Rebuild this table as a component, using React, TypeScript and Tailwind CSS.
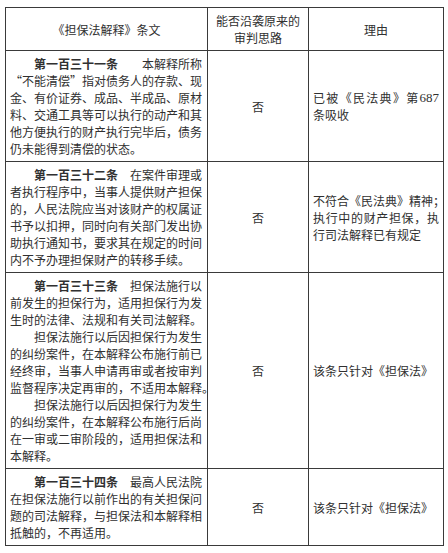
import React from "react";

const FONT = { fontFamily: '"Noto Sans CJK SC", "Noto Sans", sans-serif' };

function Ch({ c, bold }: { c: string; bold?: boolean }) {
  if (c === "687") {
    return (
      <span style={{ fontFamily: '"Liberation Serif", serif' }} className="text-[13px]">
        {c}
      </span>
    );
  }
  const align = c === "“" ? "text-right" : c === "”" ? "text-left" : "text-left";
  const cls = ["inline-block w-[12px] overflow-visible", align, bold ? "font-bold" : ""].join(" ");
  return <span className={cls}>{c === "　" ? "\u00a0" : c}</span>;
}

function L({ t, b, last, indent }: { t: string | string[]; b?: string; last?: boolean; indent?: boolean }) {
  const boldChars = b ? Array.from(b) : [];
  const tokens = Array.isArray(t) ? t : Array.from(t);
  const cls = [
    "flex whitespace-nowrap",
    last ? "justify-start" : "justify-between",
    indent ? "pl-[24px]" : "",
  ].join(" ");
  return (
    <div className={cls}>
      {boldChars.map((c, i) => (
        <Ch key={"b" + i} c={c} bold />
      ))}
      {tokens.map((c, i) => (
        <Ch key={"t" + i} c={c} />
      ))}
    </div>
  );
}

function Row({ left, right }: { left: React.ReactNode; right: React.ReactNode }) {
  return (
    <tr>
      <td className="border border-[#3a3a3a] pl-[4px] pr-[5px] py-[4px] align-top">{left}</td>
      <td className="border border-[#3a3a3a] text-center align-middle">否</td>
      <td className="border border-[#3a3a3a] px-[4px] align-middle">{right}</td>
    </tr>
  );
}

export default function App() {
  return (
    <div className="w-[448px] h-[553px] bg-white overflow-hidden pt-[7px] pl-[5px]" style={FONT} lang="zh-CN">
      <table className="table-fixed border-collapse w-[438px] text-[12px] leading-[17px] text-[#303030]">
        <colgroup>
          <col className="w-[202px]" />
          <col className="w-[101px]" />
          <col className="w-[135px]" />
        </colgroup>
        <thead>
          <tr>
            <th className="border border-[#3a3a3a] font-normal text-center align-middle py-[4px]">《担保法解释》条文</th>
            <th className="border border-[#3a3a3a] font-normal text-center align-middle py-[4px]">
              <div>能否沿袭原来的</div>
              <div>审判思路</div>
            </th>
            <th className="border border-[#3a3a3a] font-normal text-center align-middle py-[4px]">理由</th>
          </tr>
        </thead>
        <tbody>
          <Row
            left={
              <>
                <L indent b="第一百三十一条" t="　　本解释所称" />
                <L t="“不能清偿”指对债务人的存款、现" />
                <L t="金、有价证券、成品、半成品、原材" />
                <L t="料、交通工具等可以执行的动产和其" />
                <L t="他方便执行的财产执行完毕后，债务" />
                <L last t="仍未能得到清偿的状态。" />
              </>
            }
            right={
              <>
                <L t={["已", "被", "《", "民", "法", "典", "》", "第", "687"]} />
                <L last t="条吸收" />
              </>
            }
          />
          <Row
            left={
              <>
                <L indent b="第一百三十二条" t="　在案件审理或" />
                <L t="者执行程序中，当事人提供财产担保" />
                <L t="的，人民法院应当对该财产的权属证" />
                <L t="书予以扣押，同时向有关部门发出协" />
                <L t="助执行通知书，要求其在规定的时间" />
                <L last t="内不予办理担保财产的转移手续。" />
              </>
            }
            right={
              <>
                <L t="不符合《民法典》精神；" />
                <L t="执行中的财产担保，执" />
                <L last t="行司法解释已有规定" />
              </>
            }
          />
          <Row
            left={
              <>
                <L indent b="第一百三十三条" t="　担保法施行以" />
                <L t="前发生的担保行为，适用担保行为发" />
                <L t="生时的法律、法规和有关司法解释。" />
                <L indent t="担保法施行以后因担保行为发生" />
                <L t="的纠纷案件，在本解释公布施行前已" />
                <L t="经终审，当事人申请再审或者按审判" />
                <L t="监督程序决定再审的，不适用本解释。" />
                <L indent t="担保法施行以后因担保行为发生" />
                <L t="的纠纷案件，在本解释公布施行后尚" />
                <L t="在一审或二审阶段的，适用担保法和" />
                <L last t="本解释。" />
              </>
            }
            right={<L last t="该条只针对《担保法》" />}
          />
          <Row
            left={
              <>
                <L indent b="第一百三十四条" t="　最高人民法院" />
                <L t="在担保法施行以前作出的有关担保问" />
                <L t="题的司法解释，与担保法和本解释相" />
                <L last t="抵触的，不再适用。" />
              </>
            }
            right={<L last t="该条只针对《担保法》" />}
          />
        </tbody>
      </table>
    </div>
  );
}
